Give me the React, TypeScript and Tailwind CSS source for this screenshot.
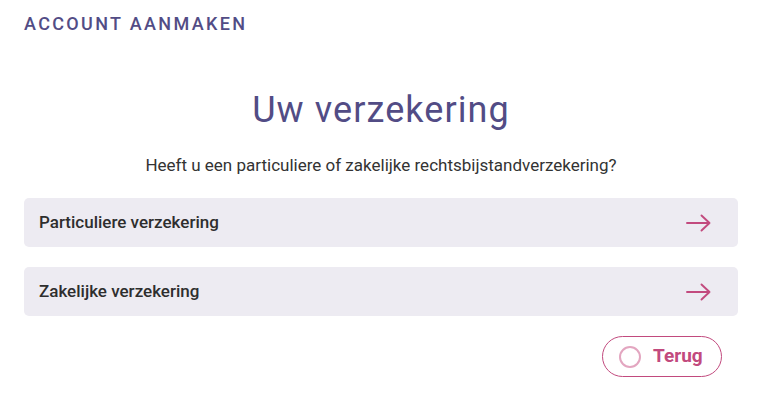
import { useState } from "react";

const options = ["Particuliere verzekering", "Zakelijke verzekering"];

function ArrowRight() {
  return (
    <svg width="25" height="18" viewBox="0 0 25 18" fill="none">
      <path
        d="M1 9h22.5M15.5 1.5 23.5 9l-8 7.5"
        stroke="#c24a7e"
        strokeWidth="1.9"
        strokeLinecap="round"
        strokeLinejoin="round"
      />
    </svg>
  );
}

function App() {
  const [picked, setPicked] = useState<string | null>(null);

  return (
    <div className="w-[758px] h-[398px] bg-white pl-6 pr-5 pt-[14px] font-['Roboto',sans-serif]">
      <div className="text-[18px] font-medium tracking-[0.13em] text-[#524c85] leading-5">
        ACCOUNT AANMAKEN
      </div>

      <h1 className="mt-[54px] text-center text-[36px] leading-[44px] tracking-[0.03em] text-[#524c85]">
        Uw verzekering
      </h1>

      <p className="mt-[23px] text-center text-[17px] leading-5 text-[#333]">
        Heeft u een particuliere of zakelijke rechtsbijstandverzekering?
      </p>

      <div className="mt-[23px] flex flex-col gap-[20px]">
        {options.map((o) => (
          <button
            key={o}
            onClick={() => setPicked(o)}
            className={`flex h-[49px] items-center justify-between rounded-[5px] pl-[15px] pr-[27px] text-left ${
              picked === o ? "bg-[#e4e1ec]" : "bg-[#edebf2]"
            }`}
          >
            <span className="text-[17px] font-medium text-[#2e2e2e]">{o}</span>
            <ArrowRight />
          </button>
        ))}
      </div>

      <div className="mt-[20px] flex justify-end pr-4">
        <button className="flex h-[41px] w-[120px] items-center gap-[12px] rounded-full border border-[#c24a7e] pl-[16px]">
          <span className="h-[22px] w-[22px] rounded-full border-2 border-[#e3a6c0]" />
          <span className="text-[19px] font-bold text-[#c24a7e]">Terug</span>
        </button>
      </div>
    </div>
  );
}

export default App;
